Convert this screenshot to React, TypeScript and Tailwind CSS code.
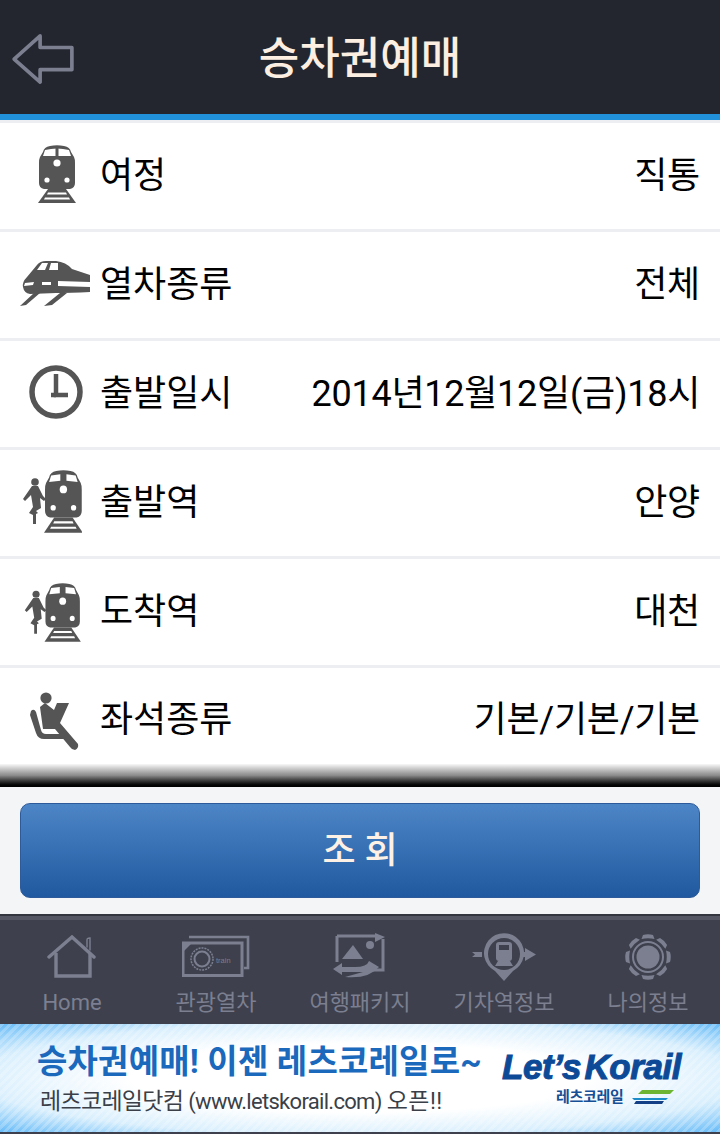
const kr = "font-['Roboto','Noto_Sans_CJK_KR',sans-serif]";

const TrainBody = () => (
  <>
    <path d="M5 7 Q6 2 12 1 Q19 -0.5 26 1 Q32 2 33 7 L36 12 Q37 14 37 18 L37 38 Q37 43 32 44 L6 44 Q1 43 1 38 L1 18 Q1 14 2 12 Z" />
    <circle cx="19" cy="18" r="3.6" fill="#fff" />
    <circle cx="9" cy="35" r="2.6" fill="#fff" />
    <circle cx="29" cy="35" r="2.6" fill="#fff" />
    <path d="M10 44 H28 L38 58 H0 Z" />
    <path d="M10 47.5 H28 L29 49.5 H9 Z M7 52.5 H31 L32 54.5 H6 Z" fill="#fff" />
  </>
);

const TrainFront = ({ className }: { className?: string }) => (
  <svg viewBox="0 0 38 58" className={className} fill="#555">
    <TrainBody />
    <path d="M7 5 Q19 2 31 5 L33 11 L5 11 Z" fill="#fff" />
    <rect x="17.5" y="3" width="3" height="9" />
  </svg>
);

const TrainSide = ({ className }: { className?: string }) => (
  <svg viewBox="0 0 70 46" className={className} fill="#555">
    <path d="M3 27 Q2 22 7 17 L17 5 Q20 1 26 1 L36 1 Q46 2 52 9 L70 15 L70 32 Q50 33 36 33 L10 34 Q4 33 3 27 Z" />
    <path d="M17 10 L22 3 L28 3 L25 10 Z M29 10 L31 3 L38 3 L38 10 Z" fill="#fff" />
    <path d="M5 23 L14 22 L13 25 L4 26 Z M22 22 L31 22 L31 25 L22 25 Z M38 21 L70 22 L70 27 L38 26 Z" fill="#fff" />
    <path d="M14 33 L20 33 L6 45 L0 46 Z M40 33 L47 33 L32 45 L24 46 Z" />
  </svg>
);

const Clock = ({ className }: { className?: string }) => (
  <svg viewBox="0 0 54 54" className={className} fill="none" stroke="#555">
    <circle cx="27" cy="27" r="24" strokeWidth="5.5" />
    <path d="M27 9 V30 H39" strokeWidth="4.5" />
    <path d="M22 30 H27" strokeWidth="4.5" />
  </svg>
);

// train with a person standing on the left
const TrainPerson = ({ className }: { className?: string }) => (
  <svg viewBox="0 0 60 64" className={className} fill="#555">
    <circle cx="13" cy="12" r="3.8" />
    <path d="M10 16 L16 16 L21 26 L24 29 L22 31 L18 28 L19 38 L14 41 L16 43 L14 44 L14 54 L11 54 L11 45 L7 43 L11 37 L9 25 L3 31 L1 29 Z" />
    <g transform="translate(22 0) scale(1.02 1.08)">
      <TrainBody />
      <path d="M7 5 L16 4 L16 10 L5 11 Z M22 4 L31 5 L33 11 L22 10 Z" fill="#fff" />
    </g>
  </svg>
);

const Seat = ({ className }: { className?: string }) => (
  <svg viewBox="0 0 50 58" className={className} fill="#555">
    <circle cx="16" cy="6" r="5.6" />
    <path d="M10 15 L15 11 L24 18 L27 11 L39 11 L30 31 L48 52 Q49 56 45 58 Q42 58 40 55 L25 37 L13 37 Z" />
    <path d="M1 19 Q4 16 6 20 L11 38 Q12 42 16 42 L33 42 L35 47 L14 47 Q8 47 6 41 L0 23 Z" />
  </svg>
);

const navStroke = "#7c7f90";

const HomeIcon = () => (
  <svg viewBox="0 0 50 44" className="w-[50px] h-[44px]" fill="none" stroke={navStroke} strokeWidth="3.4" strokeLinecap="round">
    <path d="M2 22 L25 2 L47 22" />
    <path d="M9 18 V41 H43 V18" strokeLinecap="butt" />
    <path d="M40 12 V5 Q40 3 43 3 V15" strokeWidth="1.4" />
  </svg>
);

const TourIcon = () => (
  <svg viewBox="0 0 68 44" className="w-[68px] h-[44px]" fill="none" stroke={navStroke}>
    <path d="M7 2 H66 V33 H62" strokeWidth="2.6" />
    <path d="M1 8 H60 V40.5 H1 Z" strokeWidth="3" />
    <path d="M2 8 H10 L2 16 Z" fill={navStroke} stroke="none" />
    <circle cx="20" cy="24" r="11" strokeWidth="1.5" strokeDasharray="2 1" />
    <circle cx="20" cy="24" r="7.5" strokeWidth="2" />
    <text x="34" y="28" fontSize="7.5" fill={navStroke} stroke="none" fontFamily="Liberation Sans">train</text>
  </svg>
);

const PackageIcon = () => (
  <svg viewBox="0 0 54 48" className="w-[54px] h-[48px]" fill={navStroke}>
    <path d="M4 3 H42 M50 6 V37 H22 M4 3 V29" fill="none" stroke={navStroke} strokeWidth="3" />
    <path d="M42 0 L52 4 L42 9 Z" />
    <circle cx="37" cy="12" r="4" />
    <path d="M9 26 L20 12 L30 26 Z" />
    <path d="M0 36 L9 30 V34 H22 Q34 34 36 28 L46 34 Q36 46 12 44 L30 39 H9 V42 Z" />
  </svg>
);

const StationIcon = () => (
  <svg viewBox="0 0 64 48" className="w-[64px] h-[48px]" fill={navStroke}>
    <path d="M32 48 L23 38 A20 20 0 1 1 41 38 Z" />
    <circle cx="32" cy="21" r="16" fill="#3e414d" />
    <rect x="24" y="9" width="16" height="19" rx="3" />
    <rect x="27" y="12" width="10" height="5" fill="#3e414d" />
    <path d="M26 28 H38 L41 33 H23 Z" />
    <path d="M0 19 H10 V24 H0 L3 21.5 Z" />
    <path d="M50 19 H53 V15 L64 21.5 L53 28 V24 H50 Z" />
  </svg>
);

const MyIcon = () => (
  <svg viewBox="0 0 46 46" className="w-[46px] h-[46px]" fill={navStroke}>
    <circle cx="23" cy="23" r="11.5" />
    <circle cx="23" cy="23" r="15" fill="none" stroke={navStroke} strokeWidth="2" />
    {[0, 45, 90, 135, 180, 225, 270, 315].map((deg) => (
      <path key={deg} d="M18 1 Q23 -0.5 28 1 L29.5 5 Q23 3.5 16.5 5 Z" transform={`rotate(${deg} 23 23)`} />
    ))}
  </svg>
);

const rows = [
  { label: "여정", value: "직통", icon: <TrainFront className="w-[38px] h-[58px] ml-[17px]" /> },
  { label: "열차종류", value: "전체", icon: <TrainSide className="w-[70px] h-[46px] -ml-[1px]" /> },
  { label: "출발일시", value: "2014년12월12일(금)18시", icon: <Clock className="w-[54px] h-[54px] ml-[8px]" /> },
  { label: "출발역", value: "안양", icon: <TrainPerson className="w-[60px] h-[64px] ml-[1px] mt-[2px]" /> },
  { label: "도착역", value: "대천", icon: <TrainPerson className="w-[60px] h-[60px] ml-[1px] mt-[6px]" /> },
  { label: "좌석종류", value: "기본/기본/기본", icon: <Seat className="w-[50px] h-[58px] ml-[9px] mt-[6px]" /> },
];

const navItems = [
  { label: "Home", icon: <HomeIcon /> },
  { label: "관광열차", icon: <TourIcon /> },
  { label: "여행패키지", icon: <PackageIcon /> },
  { label: "기차역정보", icon: <StationIcon /> },
  { label: "나의정보", icon: <MyIcon /> },
];

export default function App() {
  return (
    <div className={`w-[720px] h-[1134px] overflow-hidden flex flex-col bg-white ${kr}`}>
      <header className="relative h-[120px] shrink-0 bg-[#23262e] border-b-[6px] border-[#2191dc] flex items-center justify-center">
        <svg viewBox="0 0 64 54" className="absolute left-[11px] top-[34px] w-[64px] h-[52px]" fill="none" stroke="#7b7f90" strokeWidth="3.8" strokeLinejoin="round" strokeLinecap="round">
          <path d="M29 2 L2 26 L29 50 V37 H62 V14 H29 Z" />
        </svg>
        <h1 className="text-[44px] leading-none font-medium text-[#fdeee2] mt-[4px]">승차권예매</h1>
      </header>

      <ul className="border-t-[3px] border-[#eceef1]">
        {rows.map((row, i) => (
          <li
            key={row.label}
            className={
              i === rows.length - 1
                ? "h-[96px] pt-[4px] flex items-center text-black"
                : "h-[109px] pb-[5px] border-b-[3px] border-[#eceef1] flex items-center text-black"
            }
          >
            <div className="w-[100px] shrink-0 flex items-center pl-[21px]">{row.icon}</div>
            <span className="mt-[4px] text-[36px] leading-none">{row.label}</span>
            <span className="ml-auto mt-[4px] pr-[20px] text-[36px] leading-none tracking-[-0.25px]">{row.value}</span>
          </li>
        ))}
      </ul>

      <div className="h-[23px] shrink-0 bg-gradient-to-b from-[#f8f8f8] via-[#8a8a8a] to-black" />

      <div className="h-[127px] shrink-0 bg-[#f4f5f7] px-[20px] pt-[16px]">
        <button className="w-full h-[95px] rounded-[10px] border border-[#2c5a9a] bg-gradient-to-b from-[#4d86c7] to-[#20599f] text-[#fdf0e4] text-[36px] font-medium tracking-[9px] leading-none pl-[9px]">
          조회
        </button>
      </div>

      <nav className="h-[110px] shrink-0 bg-[#3e414d] border-t-[2px] border-[#33353f] flex">
        {navItems.map((item) => (
          <div key={item.label} className="flex-1 flex flex-col items-center border-t-[4px] border-[#555764]">
            <div className="h-[46px] mt-[14px] flex items-center justify-center">{item.icon}</div>
            <span className="mt-[12px] text-[22px] leading-none text-[#7c7f90]">{item.label}</span>
          </div>
        ))}
      </nav>

      <div className="relative h-[108px] shrink-0 overflow-hidden bg-[radial-gradient(ellipse_at_center,#ffffff_45%,#d9effd_75%,#66bbf8_100%)]">
        <div className="absolute inset-0 bg-[repeating-linear-gradient(135deg,rgba(255,255,255,0.22)_0px,rgba(255,255,255,0.22)_3px,transparent_3px,transparent_6px)]" />
        <div className="relative flex h-full">
          <div className="pl-[37px] pt-[19px] w-[490px] shrink-0">
            <p className="text-[33px] leading-[38px] font-bold tracking-[0.2px] text-[#1a69bd] whitespace-nowrap">승차권예매! 이젠 레츠코레일로~</p>
            <p className="mt-[6px] pl-[3px] text-[23px] leading-[30px] tracking-[-0.7px] text-[#3a3f48] whitespace-nowrap">
              레츠코레일닷컴 <span className="text-[22px]">(www.letskorail.com)</span> <span className="tracking-[0.5px]">오픈!!</span>
            </p>
          </div>
          <div className="pl-[12px] pt-[25px]">
            <p className="font-['Liberation_Sans',sans-serif] italic font-bold text-[35px] leading-[36px] tracking-[-0.4px] [word-spacing:-6px] [-webkit-text-stroke:1px_#0c4a97] text-[#0c4a97] whitespace-nowrap">Let’s Korail</p>
            <div className="flex items-center gap-[8px] pl-[54px] mt-[3px]">
              <span className="text-[15px] leading-[18px] font-bold tracking-[-0.3px] text-[#164f95]">레츠코레일</span>
              <svg viewBox="0 0 42 14" className="w-[42px] h-[14px]">
                <path d="M10 0 H42 L38 4 H6 Z" fill="#6cb532" />
                <path d="M0 8 H36 L34 10 H2 Z" fill="#1c8cc9" />
                <path d="M4 11 H32 L30 14 H2 Z" fill="#123f85" />
              </svg>
            </div>
          </div>
        </div>
      </div>
      <div className="h-[2px] shrink-0 bg-[#3e414d]" />
    </div>
  );
}
